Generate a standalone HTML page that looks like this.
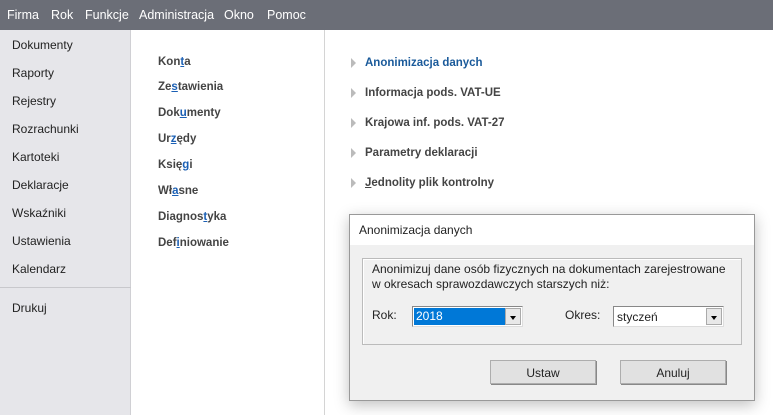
<!DOCTYPE html>
<html><head><meta charset="utf-8"><style>
*{margin:0;padding:0;box-sizing:border-box}
body{width:773px;height:415px;overflow:hidden;background:#fff;font-family:"Liberation Sans","DejaVu Sans",sans-serif;font-size:12px;position:relative;color:#222}
.bar{position:absolute;left:0;top:0;width:773px;height:30px;background:#6b6e77;color:#fff;font-size:12.5px}
.bar span{position:absolute;top:8px}
.side{position:absolute;left:0;top:30px;width:131px;height:385px;background:#e6e6ea;border-right:1px solid #d0d0d4}
.side div{position:absolute;left:12px;font-size:12px;color:#222}
.sep{position:absolute;left:0;width:131px;height:1px;background:#c8c8cc}
.vline{position:absolute;left:324px;top:30px;width:1px;height:385px;background:#d4d4d4}
.mid div{position:absolute;left:158px;font-weight:bold;font-size:11.5px;color:#444}
.mid u,.r u{color:#1a5fb4;text-decoration:underline}
.r div{position:absolute;left:365px;font-weight:bold;font-size:11.5px;color:#444}
.tri{position:absolute;left:351px;width:0;height:0;border-left:5px solid #bbb;border-top:5px solid transparent;border-bottom:5px solid transparent}
.dlg{position:absolute;left:349px;top:214px;width:406px;height:187px;background:#f0f0f0;border:1px solid #999;box-shadow:0 4px 14px rgba(0,0,0,.25)}
.dlg .t{position:absolute;left:0;top:0;width:404px;height:30px;background:#fff;font-size:12px;padding:8px 0 0 9px}
.grp{position:absolute;left:12px;top:43px;width:380px;height:87px;border:1px solid #bbb;box-shadow:inset 1px 1px 0 #fff}
.txt{position:absolute;font-size:12px;color:#222}
.cb{position:absolute;height:21px;border:1px solid #888;background:#fff;border-right-color:#ddd;border-bottom-color:#ddd}
.arr{position:absolute;right:1px;top:1px;width:16px;height:17px;background:#e8e8e8;border:1px solid #aaa}
.arr:after{content:"";position:absolute;left:4px;top:7px;border-top:4px solid #000;border-left:3.5px solid transparent;border-right:3.5px solid transparent}
.btn{position:absolute;top:145px;width:106px;height:24px;background:#e1e1e1;border:1px solid #adadad;text-align:center;font-size:12px;padding-top:5px;box-shadow:1px 1px 0 #888}
</style></head><body>
<div class="bar"><span style="left:7px">Firma</span><span style="left:51px">Rok</span><span style="left:85px">Funkcje</span><span style="left:139px">Administracja</span><span style="left:224px">Okno</span><span style="left:267px">Pomoc</span></div>
<div class="side">
<div style="top:8px">Dokumenty</div><div style="top:36px">Raporty</div><div style="top:64px">Rejestry</div><div style="top:92px">Rozrachunki</div><div style="top:120px">Kartoteki</div><div style="top:148px">Deklaracje</div><div style="top:176px">Wskaźniki</div><div style="top:204px">Ustawienia</div><div style="top:232px">Kalendarz</div>
<div class="sep" style="left:0;top:257px"></div>
<div style="top:271px">Drukuj</div></div>
<div class="vline"></div>
<div class="mid">
<div style="top:56px">Kon<u>t</u>a</div><div style="top:81px">Ze<u>s</u>tawienia</div><div style="top:107px">Dok<u>u</u>menty</div><div style="top:133px">Ur<u>z</u>ędy</div><div style="top:159px">Księ<u>g</u>i</div><div style="top:185px">Wł<u>a</u>sne</div><div style="top:211px">Diagnos<u>t</u>yka</div><div style="top:237px">Def<u>i</u>niowanie</div></div>
<div class="r">
<span class="tri" style="top:58px"></span><div style="top:57px;color:#1a5a9a">Anonimizacja danych</div>
<span class="tri" style="top:88px"></span><div style="top:87px">Informacja pods. VAT-UE</div>
<span class="tri" style="top:118px"></span><div style="top:117px">Krajowa inf. pods. VAT-27</div>
<span class="tri" style="top:148px"></span><div style="top:147px">Parametry deklaracji</div>
<span class="tri" style="top:178px"></span><div style="top:177px"><u style="color:#444">J</u>ednolity plik kontrolny</div></div>
<div class="dlg"><div class="t">Anonimizacja danych</div>
<div class="grp"></div>
<div class="txt" style="left:22px;top:47px;line-height:15px">Anonimizuj dane osób fizycznych na dokumentach zarejestrowane<br>w okresach sprawozdawczych starszych niż:</div>
<div class="txt" style="left:22px;top:93px">Rok:</div>
<div class="cb" style="left:62px;top:91px;width:111px"><div style="position:absolute;left:1px;top:1px;width:91px;height:17px;background:#0078d7;color:#fff;font-size:12px;padding:1px 0 0 2px">2018</div><div class="arr"></div></div>
<div class="txt" style="left:215px;top:93px">Okres:</div>
<div class="cb" style="left:263px;top:91px;width:111px"><div style="position:absolute;left:3px;top:3px;font-size:12px">styczeń</div><div class="arr"></div></div>
<div class="btn" style="left:140px">Ustaw</div>
<div class="btn" style="left:270px">Anuluj</div>
</div>
</body></html>
